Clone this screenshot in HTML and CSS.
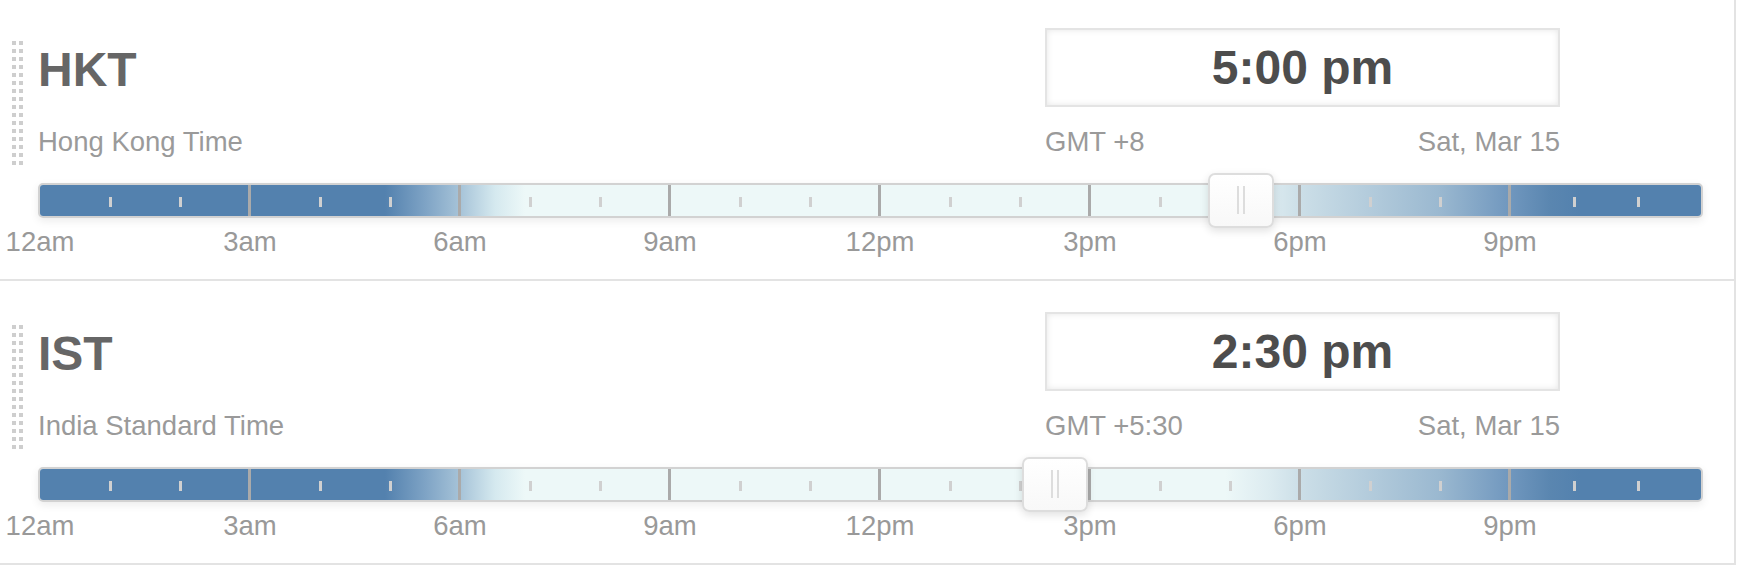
FILE: index.html
```html
<!DOCTYPE html>
<html>
<head>
<meta charset="utf-8">
<title>Time zones</title>
<link rel="stylesheet" href="styles.css">
</head>
<body>
<div class="list">
  <div class="row">
    <div class="grip"></div>
    <div class="top">
      <div class="names">
        <div class="abbr">HKT</div>
        <div class="full">Hong Kong Time</div>
      </div>
      <div class="clock">
        <div class="timebox">5:00 pm</div>
        <div class="meta"><span>GMT +8</span><span>Sat, Mar 15</span></div>
      </div>
    </div>
    <div class="track">
      <div class="bar">
        <div class="segs">
          <div class="seg"></div><div class="seg"></div><div class="seg"></div><div class="seg"></div>
          <div class="seg"></div><div class="seg"></div><div class="seg"></div><div class="seg last"></div>
        </div>
      </div>
      <div class="handle" style="left:1170px"></div>
    </div>
    <div class="labels">
      <span>12am</span><span>3am</span><span>6am</span><span>9am</span><span>12pm</span><span>3pm</span><span>6pm</span><span>9pm</span>
    </div>
  </div>
  <div class="row">
    <div class="grip"></div>
    <div class="top">
      <div class="names">
        <div class="abbr">IST</div>
        <div class="full">India Standard Time</div>
      </div>
      <div class="clock">
        <div class="timebox">2:30 pm</div>
        <div class="meta"><span>GMT +5:30</span><span>Sat, Mar 15</span></div>
      </div>
    </div>
    <div class="track">
      <div class="bar">
        <div class="segs">
          <div class="seg"></div><div class="seg"></div><div class="seg"></div><div class="seg"></div>
          <div class="seg"></div><div class="seg"></div><div class="seg"></div><div class="seg last"></div>
        </div>
      </div>
      <div class="handle" style="left:984px"></div>
    </div>
    <div class="labels">
      <span>12am</span><span>3am</span><span>6am</span><span>9am</span><span>12pm</span><span>3pm</span><span>6pm</span><span>9pm</span>
    </div>
  </div>
</div>
</body>
</html>
```

FILE: styles.css
```css
html, body {
  margin: 0;
  padding: 0;
  background: #fff;
  font-family: "Liberation Sans", Arial, Helvetica, sans-serif;
}

.list {
  width: 1736px;
  margin-top: -3px;
  border-right: 2px solid #e3e3e3;
  box-sizing: border-box;
}

.row {
  position: relative;
  height: 284px;
  box-sizing: border-box;
  border-bottom: 2px solid #e3e3e3;
  padding: 31px 31px 0 38px;
}

.grip {
  position: absolute;
  left: 12px;
  top: 44px;
  width: 11px;
  height: 124px;
  background-image:
    linear-gradient(to bottom, transparent 4px, #fff 4px),
    linear-gradient(to right, #c2c2c2 4px, transparent 4px, transparent 7px, #c2c2c2 7px);
  background-size: 11px 8px, 11px 100%;
  background-repeat: repeat, no-repeat;
  opacity: 0.8;
}

.top {
  display: flex;
  align-items: flex-start;
}

.names {
  flex: 1;
}

.abbr {
  margin-top: 17.5px;
  font-size: 48px;
  line-height: 48px;
  font-weight: bold;
  color: #666;
}

.full {
  margin-top: 32px;
  font-size: 27.5px;
  line-height: 32px;
  color: #9a9a9a;
}

.clock {
  width: 515px;
  margin-right: 143px;
}

.timebox {
  height: 79px;
  box-sizing: border-box;
  border: 2px solid #e4e4e4;
  box-shadow: inset 0 0 6px rgba(0, 0, 0, 0.1);
  text-align: center;
  font-size: 48px;
  line-height: 75px;
  font-weight: bold;
  color: #4d4d4d;
}

.meta {
  display: flex;
  justify-content: space-between;
  margin-top: 18.5px;
  font-size: 27.5px;
  line-height: 32px;
  color: #9a9a9a;
}

.track {
  position: relative;
  margin-top: 25.5px;
  height: 35px;
}

.bar {
  height: 35px;
  box-sizing: border-box;
  border: 2px solid #d2d2d2;
  border-radius: 5px;
  overflow: hidden;
  box-shadow: 0 3px 8px rgba(0, 0, 0, 0.08);
}

.segs {
  display: flex;
  width: 1662px;
  height: 100%;
  background: linear-gradient(to right,
    #5381ae 0px,
    #5381ae 345px,
    #7ea3c5 385px,
    #a6c3d8 420px,
    #d5e9ef 455px,
    #edf8f8 485px,
    #edf8f8 1185px,
    #dcebf0 1230px,
    #cbdee7 1262px,
    #9ab8d0 1400px,
    #7097be 1470px,
    #5a86b0 1510px,
    #5381ae 1540px,
    #5381ae 1662px);
}

.seg {
  flex: 0 0 210px;
  position: relative;
  background-image: linear-gradient(#d0d0d0, #d0d0d0), linear-gradient(#d0d0d0, #d0d0d0);
  background-size: 3px 10px;
  background-repeat: no-repeat;
  background-position: 68.5px 12px, 138.5px 12px;
}

.seg.last {
  flex: 0 0 192px;
  background-position: 63px 12px, 127px 12px;
}

.seg + .seg::before {
  content: "";
  position: absolute;
  left: -2px;
  top: 0;
  bottom: 0;
  width: 3px;
  background: #aaaaaa;
}

.handle {
  position: absolute;
  top: -10px;
  width: 66px;
  height: 55px;
  box-sizing: border-box;
  border: 2px solid #dddddd;
  border-radius: 7px;
  background: linear-gradient(#ffffff, #f8f8f8);
  box-shadow: 0 3px 8px rgba(0, 0, 0, 0.12);
}

.handle::after {
  content: "";
  position: absolute;
  left: 27px;
  top: 11px;
  width: 4px;
  height: 28px;
  border-left: 2px solid #dddddd;
  border-right: 2px solid #dddddd;
}

.labels {
  display: flex;
  margin-left: -103px;
  margin-top: 8.5px;
  font-size: 27.5px;
  line-height: 30px;
  color: #999;
}

.labels span {
  flex: 0 0 210px;
  text-align: center;
}
```
